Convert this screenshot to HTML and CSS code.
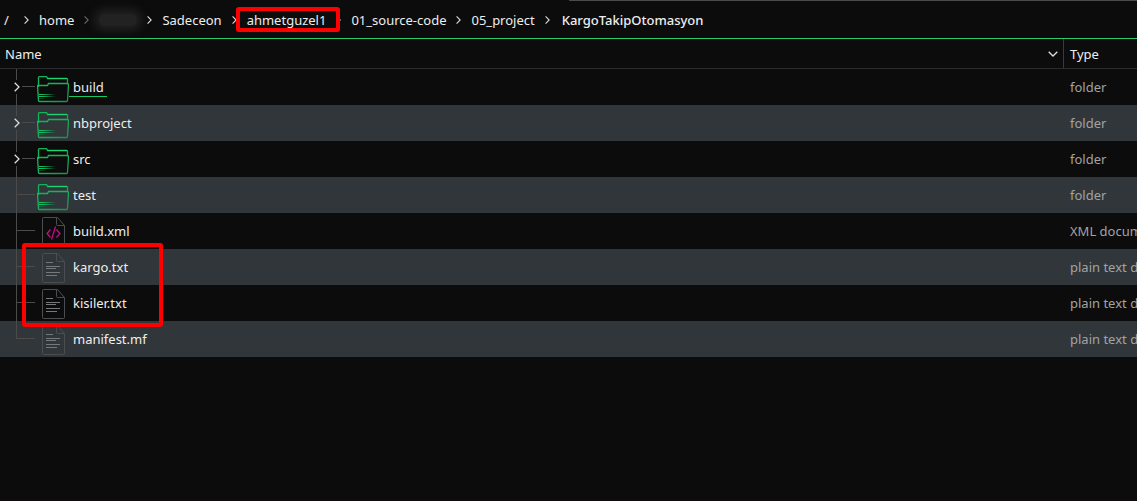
FILE: index.html
```html
<!DOCTYPE html>
<html lang="en">
<head>
<meta charset="utf-8">
<title>KargoTakipOtomasyon</title>
<link rel="stylesheet" href="styles.css">
</head>
<body>
<svg class="defs" aria-hidden="true">
  <defs>
    <linearGradient id="fade" x1="0" x2="1"><stop offset="0" stop-color="#14c864"/><stop offset=".3" stop-color="#14c864" stop-opacity=".85"/><stop offset="1" stop-color="#14c864" stop-opacity="0"/></linearGradient>
    <linearGradient id="edge" x1="0" y1="0" x2="1" y2="1"><stop offset="0" stop-color="#10b457"/><stop offset=".4" stop-color="#12b85b"/><stop offset="1" stop-color="#26884f"/></linearGradient>
    <symbol id="chevron" viewBox="0 0 6 10"><path d="M.7.7 5 5 .7 9.3" fill="none" stroke="#dedede" stroke-width="1.3"/></symbol>
    <symbol id="folder" viewBox="0 0 32 27">
      <path d="M1.5 11V2Q1.5.5 3 .5H9.500L10.500 2.500H30Q30.500 2.500 30.500 3.500V7.500" fill="none" stroke="url(#edge)" stroke-width="1.300"/>
      <path d="M10.500 2.500H30M11.500 7.500H30.500" fill="none" stroke="#1bd66e"/>
      <path d="M.5 9.500H10.500L11.500 7.500H30Q31.500 7.500 31.500 9L30.500 24.500Q30.500 25.500 29.500 25.500H2.500Q1.500 25.500 1.500 24.500Z" fill="none" stroke="url(#edge)" stroke-width="1.300"/>
      <rect x="2" y="18" width="17" height="1" fill="url(#fade)"/>
      <rect x="2" y="20" width="17" height="1" fill="url(#fade)"/>
      <rect x="2" y="22" width="8" height="1" fill="url(#fade)" opacity=".3"/>
    </symbol>
    <symbol id="page" viewBox="0 0 24 30"><path d="M1.500.5H15.500L22.500 8.500V28.500Q22.500 29.500 21.500 29.500H1.500Q.5 29.500.5 28.500V1.500Q.5.5 1.500.5M14.500.5V7.500Q14.500 8.500 15.500 8.500H22.500" fill="none" stroke="#4b4e50"/></symbol>
    <symbol id="text" viewBox="0 0 24 30"><use href="#page"/><path d="M4 9.500H11M4 13.500H18M4 15.500H14M4 19.500H18M4 22.500H15" stroke="#76797b"/></symbol>
    <symbol id="xml" viewBox="0 0 24 30"><use href="#page"/><path d="M8.500 12.500 5 16.500 8.500 20.500M14.500 12.500 18 16.500 14.500 20.500M13.500 9.500 9.500 22.500" fill="none" stroke="#cf0c91" stroke-width="1.200"/></symbol>
  </defs>
</svg>
<nav class="crumbs" aria-label="Path">
  <a class="root" href="#">/</a>
  <svg class="sep"><use href="#chevron"/></svg>
  <a href="#">home</a>
  <svg class="sep dim"><use href="#chevron"/></svg>
  <span class="hidden-name"></span>
  <svg class="sep"><use href="#chevron"/></svg>
  <a href="#">Sadeceon</a>
  <svg class="sep"><use href="#chevron"/></svg>
  <a class="marked" href="#">ahmetguzel1</a>
  <svg class="sep"><use href="#chevron"/></svg>
  <a href="#">01_source-code</a>
  <svg class="sep"><use href="#chevron"/></svg>
  <a href="#">05_project</a>
  <svg class="sep"><use href="#chevron"/></svg>
  <a class="current" href="#" aria-current="page">KargoTakipOtomasyon</a>
</nav>
<main>
<table class="files">
  <thead>
    <tr>
      <th class="name-col"><button class="sort" type="button">Name<svg class="sort-icon" viewBox="0 0 10 6"><path d="M.7.7 5 5 9.300.7" fill="none" stroke="#dedede" stroke-width="1.300"/></svg></button></th>
      <th class="type-col">Type</th>
    </tr>
  </thead>
  <tbody>
    <tr><td><div class="item"><button class="branch open" type="button" aria-label="Expand build"><svg class="arrow"><use href="#chevron"/></svg></button><svg class="icon"><use href="#folder"/></svg><span class="label focus">build</span></div></td><td class="type">folder</td></tr>
    <tr><td><div class="item"><button class="branch open" type="button" aria-label="Expand nbproject"><svg class="arrow"><use href="#chevron"/></svg></button><svg class="icon"><use href="#folder"/></svg><span class="label">nbproject</span></div></td><td class="type">folder</td></tr>
    <tr><td><div class="item"><button class="branch open" type="button" aria-label="Expand src"><svg class="arrow"><use href="#chevron"/></svg></button><svg class="icon"><use href="#folder"/></svg><span class="label">src</span></div></td><td class="type">folder</td></tr>
    <tr><td><div class="item"><span class="branch"></span><svg class="icon"><use href="#folder"/></svg><span class="label">test</span></div></td><td class="type">folder</td></tr>
    <tr><td><div class="item"><span class="branch"></span><svg class="icon file"><use href="#xml"/></svg><span class="label">build.xml</span></div></td><td class="type">XML document</td></tr>
    <tr><td><div class="item"><span class="branch"></span><svg class="icon file"><use href="#text"/></svg><span class="label">kargo.txt</span><span class="highlight"></span></div></td><td class="type">plain text document</td></tr>
    <tr><td><div class="item"><span class="branch"></span><svg class="icon file"><use href="#text"/></svg><span class="label">kisiler.txt</span></div></td><td class="type">plain text document</td></tr>
    <tr><td><div class="item"><span class="branch last"></span><svg class="icon file"><use href="#text"/></svg><span class="label">manifest.mf</span></div></td><td class="type">plain text document</td></tr>
  </tbody>
</table>
</main>
</body>
</html>
```

FILE: styles.css
```css
* { box-sizing: border-box; }
body {
  margin: 0;
  min-height: 100vh;
  background: #0c0c0c;
  color: #eeeeee;
  font: 13px/20px "Noto Sans", sans-serif;
  overflow-x: hidden;
  border-bottom: 1px solid #120c0e;
}
.defs { position: absolute; width: 0; height: 0; }
a { color: inherit; text-decoration: none; }
button { border: 0; padding: 0; background: none; color: inherit; font: inherit; }
.crumbs {
  display: flex;
  align-items: center;
  gap: 10px;
  height: 39px;
  padding: 2px 4px 0;
  border-bottom: 1px solid #2ecc71;
  background: linear-gradient(#4a4a4a, #4a4a4a) right top / 50% 1px no-repeat;
  white-space: nowrap;
}
.root { width: 10px; }
.sep { width: 5px; height: 10px; flex: none; }
.dim { opacity: .45; }
.hidden-name {
  width: 38px;
  height: 12px;
  border-radius: 6px;
  background: #222222;
  box-shadow: 0 0 8px 5px #202020;
}
.marked { position: relative; }
.marked::after {
  content: "";
  position: absolute;
  inset: -3px -14px -2px -11px;
  border: 4px solid #ff0000;
  border-radius: 3px;
  z-index: 1;
}
.current { font-weight: 500; padding-left: 2px; }
.files { width: 100%; border-spacing: 0; table-layout: fixed; }
th {
  height: 30px;
  padding: 0 6px;
  border-bottom: 1px solid #2b2b2b;
  font-weight: 400;
  text-align: left;
}
.name-col { padding: 0 5px; border-right: 1px solid #3a3a3a; }
.type-col { width: 73px; }
.sort { display: flex; width: 100%; align-items: center; justify-content: space-between; }
.sort-icon { width: 10px; height: 6px; }
td { height: 36px; padding: 0; }
tbody tr:nth-child(even) { background: #31363b; }
td.type { padding-left: 6px; overflow: hidden; white-space: nowrap; color: #a1a3a4; }
.item { position: relative; display: flex; align-items: center; height: 36px; }
.branch {
  width: 35px;
  height: 36px;
  flex: none;
  background:
    linear-gradient(#4b4b4b, #4b4b4b) 16px 0 / 1px 36px no-repeat,
    linear-gradient(#4b4b4b, #4b4b4b) 17px 17px / 18px 1px no-repeat;
}
.branch.open {
  display: flex;
  align-items: center;
  padding-left: 14px;
  background:
    linear-gradient(#4b4b4b, #4b4b4b) 16px 0 / 1px 11px no-repeat,
    linear-gradient(#4b4b4b, #4b4b4b) 16px 25px / 1px 11px no-repeat,
    linear-gradient(#4b4b4b, #4b4b4b) 22px 17px / 13px 1px no-repeat;
}
.branch.last {
  background:
    linear-gradient(#4b4b4b, #4b4b4b) 16px 0 / 1px 18px no-repeat,
    linear-gradient(#4b4b4b, #4b4b4b) 17px 17px / 18px 1px no-repeat;
}
.arrow { width: 6px; height: 10px; }
.icon { width: 32px; height: 27px; margin: 5px 0 0 2px; flex: none; }
.icon.file { width: 24px; height: 30px; margin: 2px 3px 0 7px; }
.label { padding: 0 3px 0 4px; }
.focus { box-shadow: inset 0 -1px #14c864; }
.highlight {
  position: absolute;
  top: -6px;
  left: 22px;
  width: 141px;
  height: 84px;
  border: 4px solid #ff0000;
  border-radius: 3px;
  z-index: 1;
}
```
